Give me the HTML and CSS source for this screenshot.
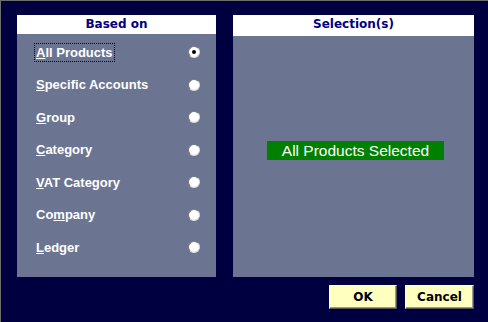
FILE: index.html
```html
<!DOCTYPE html>
<html lang="en">
<head>
    <meta charset="UTF-8">
    <title>Select Products</title>
    <link rel="stylesheet" href="styles.css">
</head>
<body>
    <div class="dialog">
        <div class="panels">
            <div class="panel based-on">
                <div class="panel-title">Based on</div>
                <ul class="options">
                    <li class="option"><span class="label focused"><u>A</u>ll Products</span><span class="radio checked"></span></li>
                    <li class="option"><span class="label"><u>S</u>pecific Accounts</span><span class="radio"></span></li>
                    <li class="option"><span class="label"><u>G</u>roup</span><span class="radio"></span></li>
                    <li class="option"><span class="label"><u>C</u>ategory</span><span class="radio"></span></li>
                    <li class="option"><span class="label"><u>V</u>AT Category</span><span class="radio"></span></li>
                    <li class="option"><span class="label">Co<u>m</u>pany</span><span class="radio"></span></li>
                    <li class="option"><span class="label"><u>L</u>edger</span><span class="radio"></span></li>
                </ul>
            </div>
            <div class="panel selection">
                <div class="panel-title tall">Selection(s)</div>
                <div class="selection-body">
                    <div class="selected-badge">All Products Selected</div>
                </div>
            </div>
        </div>
        <div class="buttons">
            <button class="btn ok">OK</button>
            <button class="btn cancel">Cancel</button>
        </div>
    </div>
</body>
</html>
```

FILE: styles.css
```css
body {
    margin: 0;
    padding: 0;
    background: #000040;
    font-family: 'DejaVu Sans', sans-serif;
    overflow: hidden;
}

.dialog {
    width: 488px;
    height: 322px;
    box-sizing: border-box;
    border-top: 1px solid #6e6e6e;
    border-left: 1px solid #6e6e6e;
    padding: 14px 14px 0 16px;
}

.panels {
    display: flex;
    gap: 17px;
    height: 262px;
}

.panel {
    background: #6b7592;
    display: flex;
    flex-direction: column;
}

.based-on {
    width: 199px;
}

.selection {
    width: 241px;
}

.panel-title {
    background: #fff;
    color: #000080;
    font-weight: bold;
    font-size: 12px;
    text-align: center;
    height: 19px;
    line-height: 18px;
}

.panel-title.tall {
    height: 21px;
    line-height: 19px;
}

/* radio list */
.options {
    list-style: none;
    margin: 0;
    padding: 2px 0 0 0;
}

.option {
    height: 32.5px;
    display: flex;
    align-items: center;
    justify-content: space-between;
    padding: 0 16px 0 17px;
}

.label {
    color: #fff;
    font-family: 'Liberation Sans', sans-serif;
    font-weight: bold;
    font-size: 13px;
    line-height: 17px;
    padding: 0 1px;
    border: 1px dotted transparent;
}

.label.focused {
    border-color: #000;
}

.radio {
    width: 10px;
    height: 10px;
    border-radius: 50%;
    background: #fff;
    border: 1px solid #7a7a7a;
    border-right-color: #d8d8d8;
    border-bottom-color: #d8d8d8;
    position: relative;
}

.radio.checked::after {
    content: "";
    position: absolute;
    left: 3px;
    top: 3px;
    width: 4px;
    height: 4px;
    border-radius: 50%;
    background: #000;
}

/* right side */
.selection-body {
    flex: 1;
    padding-top: 105px;
    display: flex;
    align-items: flex-start;
}

.selected-badge {
    background: #008000;
    color: #fff;
    font-family: 'Liberation Sans', sans-serif;
    font-size: 15.5px;
    width: 177px;
    height: 19px;
    line-height: 19px;
    text-align: center;
    margin-left: 34px;
}

/* buttons */
.buttons {
    display: flex;
    justify-content: flex-end;
    gap: 8px;
    padding-top: 8px;
}

.btn {
    height: 24px;
    background: #ffffc0;
    border: 1px solid;
    border-color: #fff #555 #555 #fff;
    box-shadow: inset -1px -1px 0 #999;
    font-family: 'DejaVu Sans', sans-serif;
    font-weight: bold;
    font-size: 12px;
    color: #000;
    padding: 0;
}

.ok {
    width: 68px;
}

.cancel {
    width: 69px;
}
```
